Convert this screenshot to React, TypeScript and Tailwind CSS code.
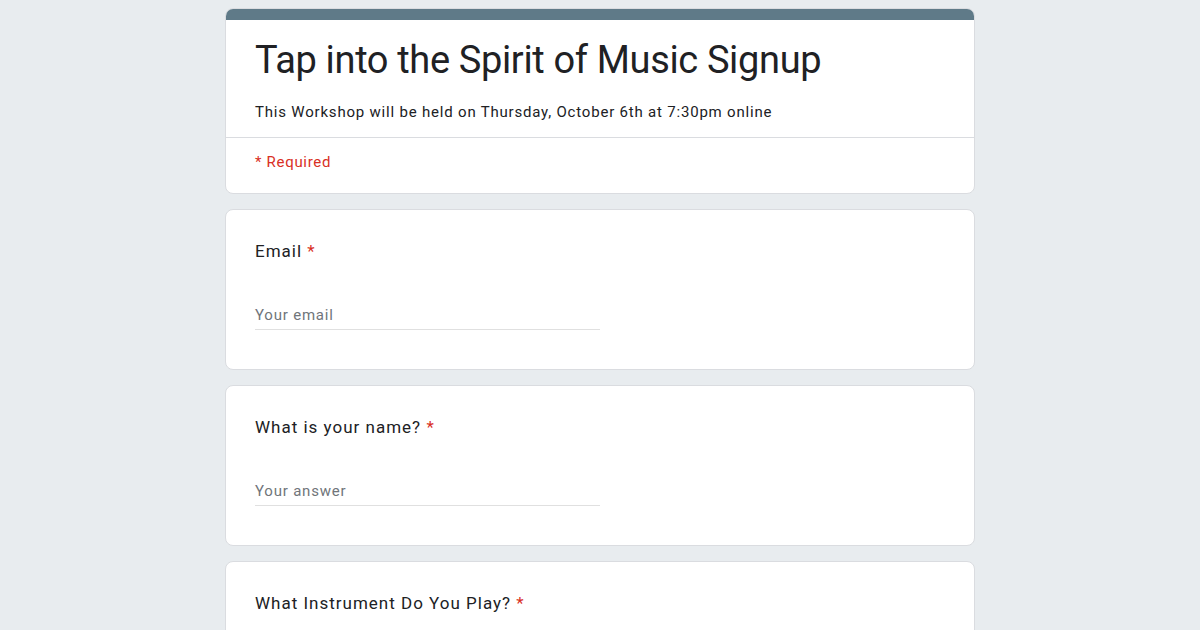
const font = { fontFamily: 'Roboto, "Liberation Sans", sans-serif' };

function Question({ label, placeholder }: { label: string; placeholder: string }) {
  return (
    <div className="mt-[15px] flex h-[161px] flex-col rounded-lg border border-[#dadce0] bg-white px-[29px] pt-[29px]">
      <div className="text-[17px] leading-6 tracking-[1px] text-[#202124]">
        {label} <span className="text-[#d93025]">*</span>
      </div>
      <div className="mt-[42px] w-[345px] border-b border-[#e0e0e0] pb-[4px] text-[15px] leading-5 tracking-[0.8px] text-[#70757a]">
        {placeholder}
      </div>
    </div>
  );
}

export default function App() {
  return (
    <div className="min-h-[630px] overflow-hidden bg-[#e8ecef]" style={font}>
      <div className="mx-auto w-[750px] pt-2">
        <div className="overflow-hidden rounded-lg border border-[#dadce0] bg-white">
          <div className="h-[11px] bg-[#5f7a88]" />
          <div className="px-[29px] pt-[16px] pb-[15px]">
            <h1 className="text-[38px] leading-[48px] tracking-[-0.35px] text-[#202124]">
              Tap into the Spirit of Music Signup
            </h1>
            <p className="mt-[18px] text-[15px] leading-5 tracking-[0.8px] text-[#202124]">
              This Workshop will be held on Thursday, October 6th at 7:30pm online
            </p>
          </div>
          <div className="border-t border-[#dadce0] px-[29px] pt-[14px] pb-[21px] text-[15px] leading-5 tracking-[0.7px] text-[#d93025]">
            * Required
          </div>
        </div>
        <Question label="Email" placeholder="Your email" />
        <Question label="What is your name?" placeholder="Your answer" />
        <div className="mt-[15px] h-[200px] rounded-lg border border-[#dadce0] bg-white px-[29px] pt-[29px]">
          <div className="text-[17px] leading-6 tracking-[1px] text-[#202124]">
            What Instrument Do You Play? <span className="text-[#d93025]">*</span>
          </div>
        </div>
      </div>
    </div>
  );
}
